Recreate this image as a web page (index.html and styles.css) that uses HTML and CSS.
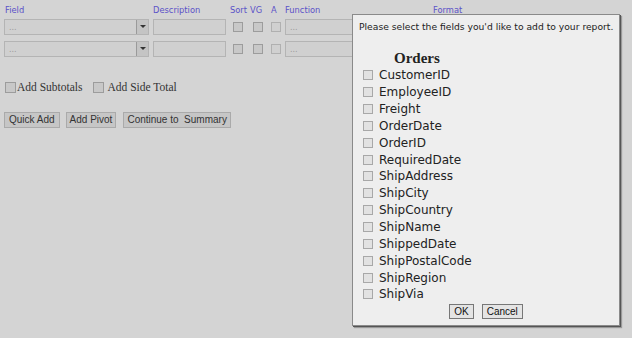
FILE: index.html
```html
<!DOCTYPE html>
<html lang="en">
<head>
  <meta charset="UTF-8" />
  <title>Report Fields</title>
  <link rel="stylesheet" href="styles.css">
</head>
<body>
  <div class="builder">
    <div class="row head">
      <span class="c-field">Field</span>
      <span class="c-desc">Description</span>
      <span class="c-sort">Sort</span>
      <span class="c-vg">VG</span>
      <span class="c-a">A</span>
      <span class="c-func">Function</span>
      <span class="c-format">Format</span>
    </div>
    <div class="row line">
      <div class="sel c-field"><span>...</span><i class="arrow"></i></div>
      <div class="txt c-desc"></div>
      <span class="box c-sort"></span>
      <span class="box c-vg"></span>
      <span class="box light c-a"></span>
      <div class="txt c-func"><span>...</span></div>
    </div>
    <div class="row line">
      <div class="sel c-field"><span>...</span><i class="arrow"></i></div>
      <div class="txt c-desc"></div>
      <span class="box c-sort"></span>
      <span class="box c-vg"></span>
      <span class="box light c-a"></span>
      <div class="txt c-func"><span>...</span></div>
    </div>

    <div class="options">
      <label><span class="box"></span>Add Subtotals</label>
      <label><span class="box"></span>Add Side Total</label>
    </div>

    <div class="actions">
      <button>Quick Add</button>
      <button>Add Pivot</button>
      <button class="wide">Continue to&nbsp; Summary</button>
    </div>
  </div>

  <div class="dialog">
    <p class="prompt">Please select the fields you'd like to add to your report.</p>
    <h3>Orders</h3>
    <ul class="fields">
      <li><span class="box"></span>CustomerID</li>
      <li><span class="box"></span>EmployeeID</li>
      <li><span class="box"></span>Freight</li>
      <li><span class="box"></span>OrderDate</li>
      <li><span class="box"></span>OrderID</li>
      <li><span class="box"></span>RequiredDate</li>
      <li><span class="box"></span>ShipAddress</li>
      <li><span class="box"></span>ShipCity</li>
      <li><span class="box"></span>ShipCountry</li>
      <li><span class="box"></span>ShipName</li>
      <li><span class="box"></span>ShippedDate</li>
      <li><span class="box"></span>ShipPostalCode</li>
      <li><span class="box"></span>ShipRegion</li>
      <li><span class="box"></span>ShipVia</li>
    </ul>
    <div class="dlg-buttons">
      <button>OK</button>
      <button>Cancel</button>
    </div>
  </div>
</body>
</html>
```

FILE: styles.css
```css
body {
  margin: 0;
  background: #d4d4d4;
  font-family: "DejaVu Sans", Verdana, sans-serif;
  color: #222;
  height: 338px;
  overflow: hidden;
}
.builder {
  padding: 3px 0 0 4px;
}
.row {
  display: flex;
  align-items: center;
}
.head {
  font-size: 8.3px;
  color: #5b52c8;
  height: 13px;
}
.line {
  height: 16px;
  margin-top: 3px;
}
.line + .line {
  margin-top: 6px;
}
.c-field { width: 149px; }
.c-desc { width: 77px; }
.head .c-field { padding-left: 1px; width: 148px; }
.head .c-desc { width: 77px; }
.head .c-sort { width: 20px; }
.head .c-vg { width: 21px; }
.head .c-a { width: 14px; }
.head .c-func { width: 148px; }
.sel, .txt {
  box-sizing: border-box;
  height: 16px;
  border: 1px solid #b4b4b4;
  background: #d0d0d0;
  font-size: 8px;
  color: #9a9a9a;
  display: flex;
  align-items: center;
  padding-left: 4px;
}
.sel {
  width: 145px;
  margin-right: 4px;
  justify-content: space-between;
  padding-right: 0;
}
.txt.c-desc {
  width: 73px;
  margin-right: 6px;
}
.line .c-func {
  width: 80px;
}
.arrow {
  width: 12px;
  height: 14px;
  box-sizing: border-box;
  border-left: 1px solid #9a9a9a;
  background: #c4c4c4;
  position: relative;
}
.arrow::after {
  content: "";
  position: absolute;
  left: 3px;
  top: 5px;
  border-left: 3px solid transparent;
  border-right: 3px solid transparent;
  border-top: 3px solid #333;
}
.box {
  display: inline-block;
  box-sizing: border-box;
  width: 10px;
  height: 10px;
  border: 1px solid #9c9c9c;
  background: #c8c8c8;
  flex: none;
}
.line .box { margin-right: 10px; }
.line .box.c-sort { margin-left: 1px; }
.line .box.c-vg { margin-right: 8px; }
.line .box.light { background: #d0d0d0; border-color: #b0b0b0; margin-right: 4px; }
.options {
  display: flex;
  gap: 9px;
  margin-top: 24px;
  font-family: "Liberation Serif", serif;
  font-size: 11.5px;
  color: #333;
}
.options label {
  display: flex;
  align-items: center;
}
.options .box {
  width: 11px;
  height: 11px;
  margin: 0 1px 0 1px;
}
.options label + label .box { margin-right: 4px; }
.actions {
  display: flex;
  gap: 6px;
  margin-top: 19px;
}
.actions .wide { margin-left: 1px; }
button {
  font-family: "Liberation Sans", Arial, sans-serif;
  font-size: 10px;
  color: #333;
  background: #c6c6c6;
  border: 1px solid #aaa;
  height: 16px;
  padding: 0 3px;
  line-height: 14px;
}
.actions button:first-child { padding: 0 4px; }
.dialog {
  position: absolute;
  left: 352px;
  top: 14px;
  width: 266px;
  height: 310px;
  background: #eeeeee;
  border: 1px solid #8a8a8a;
  box-shadow: 1px 1px 0 #555, 2px 2px 1px #999;
}
.prompt {
  margin: 6px 0 0 6px;
  font-size: 9.2px;
  white-space: nowrap;
  color: #222;
}
.dialog h3 {
  margin: 18px 0 0 41px;
  font-family: "Liberation Serif", serif;
  font-size: 15px;
  font-weight: bold;
  line-height: 17px;
}
.fields {
  list-style: none;
  margin: 0;
  padding: 0 0 0 10px;
}
.fields li {
  display: flex;
  align-items: center;
  height: 16.85px;
  font-size: 12px;
  color: #222;
}
.fields .box {
  width: 10px;
  height: 10px;
  margin-right: 6px;
  background: #e2e2e2;
  border-color: #a8a8a8;
}
.dlg-buttons {
  display: flex;
  justify-content: center;
  gap: 8px;
  margin-top: 1px;
}
.dlg-buttons button {
  font-size: 10px;
  background: #e4e4e4;
  border: 1px solid #777;
  height: 15px;
  padding: 0 4px;
  color: #111;
}
```
